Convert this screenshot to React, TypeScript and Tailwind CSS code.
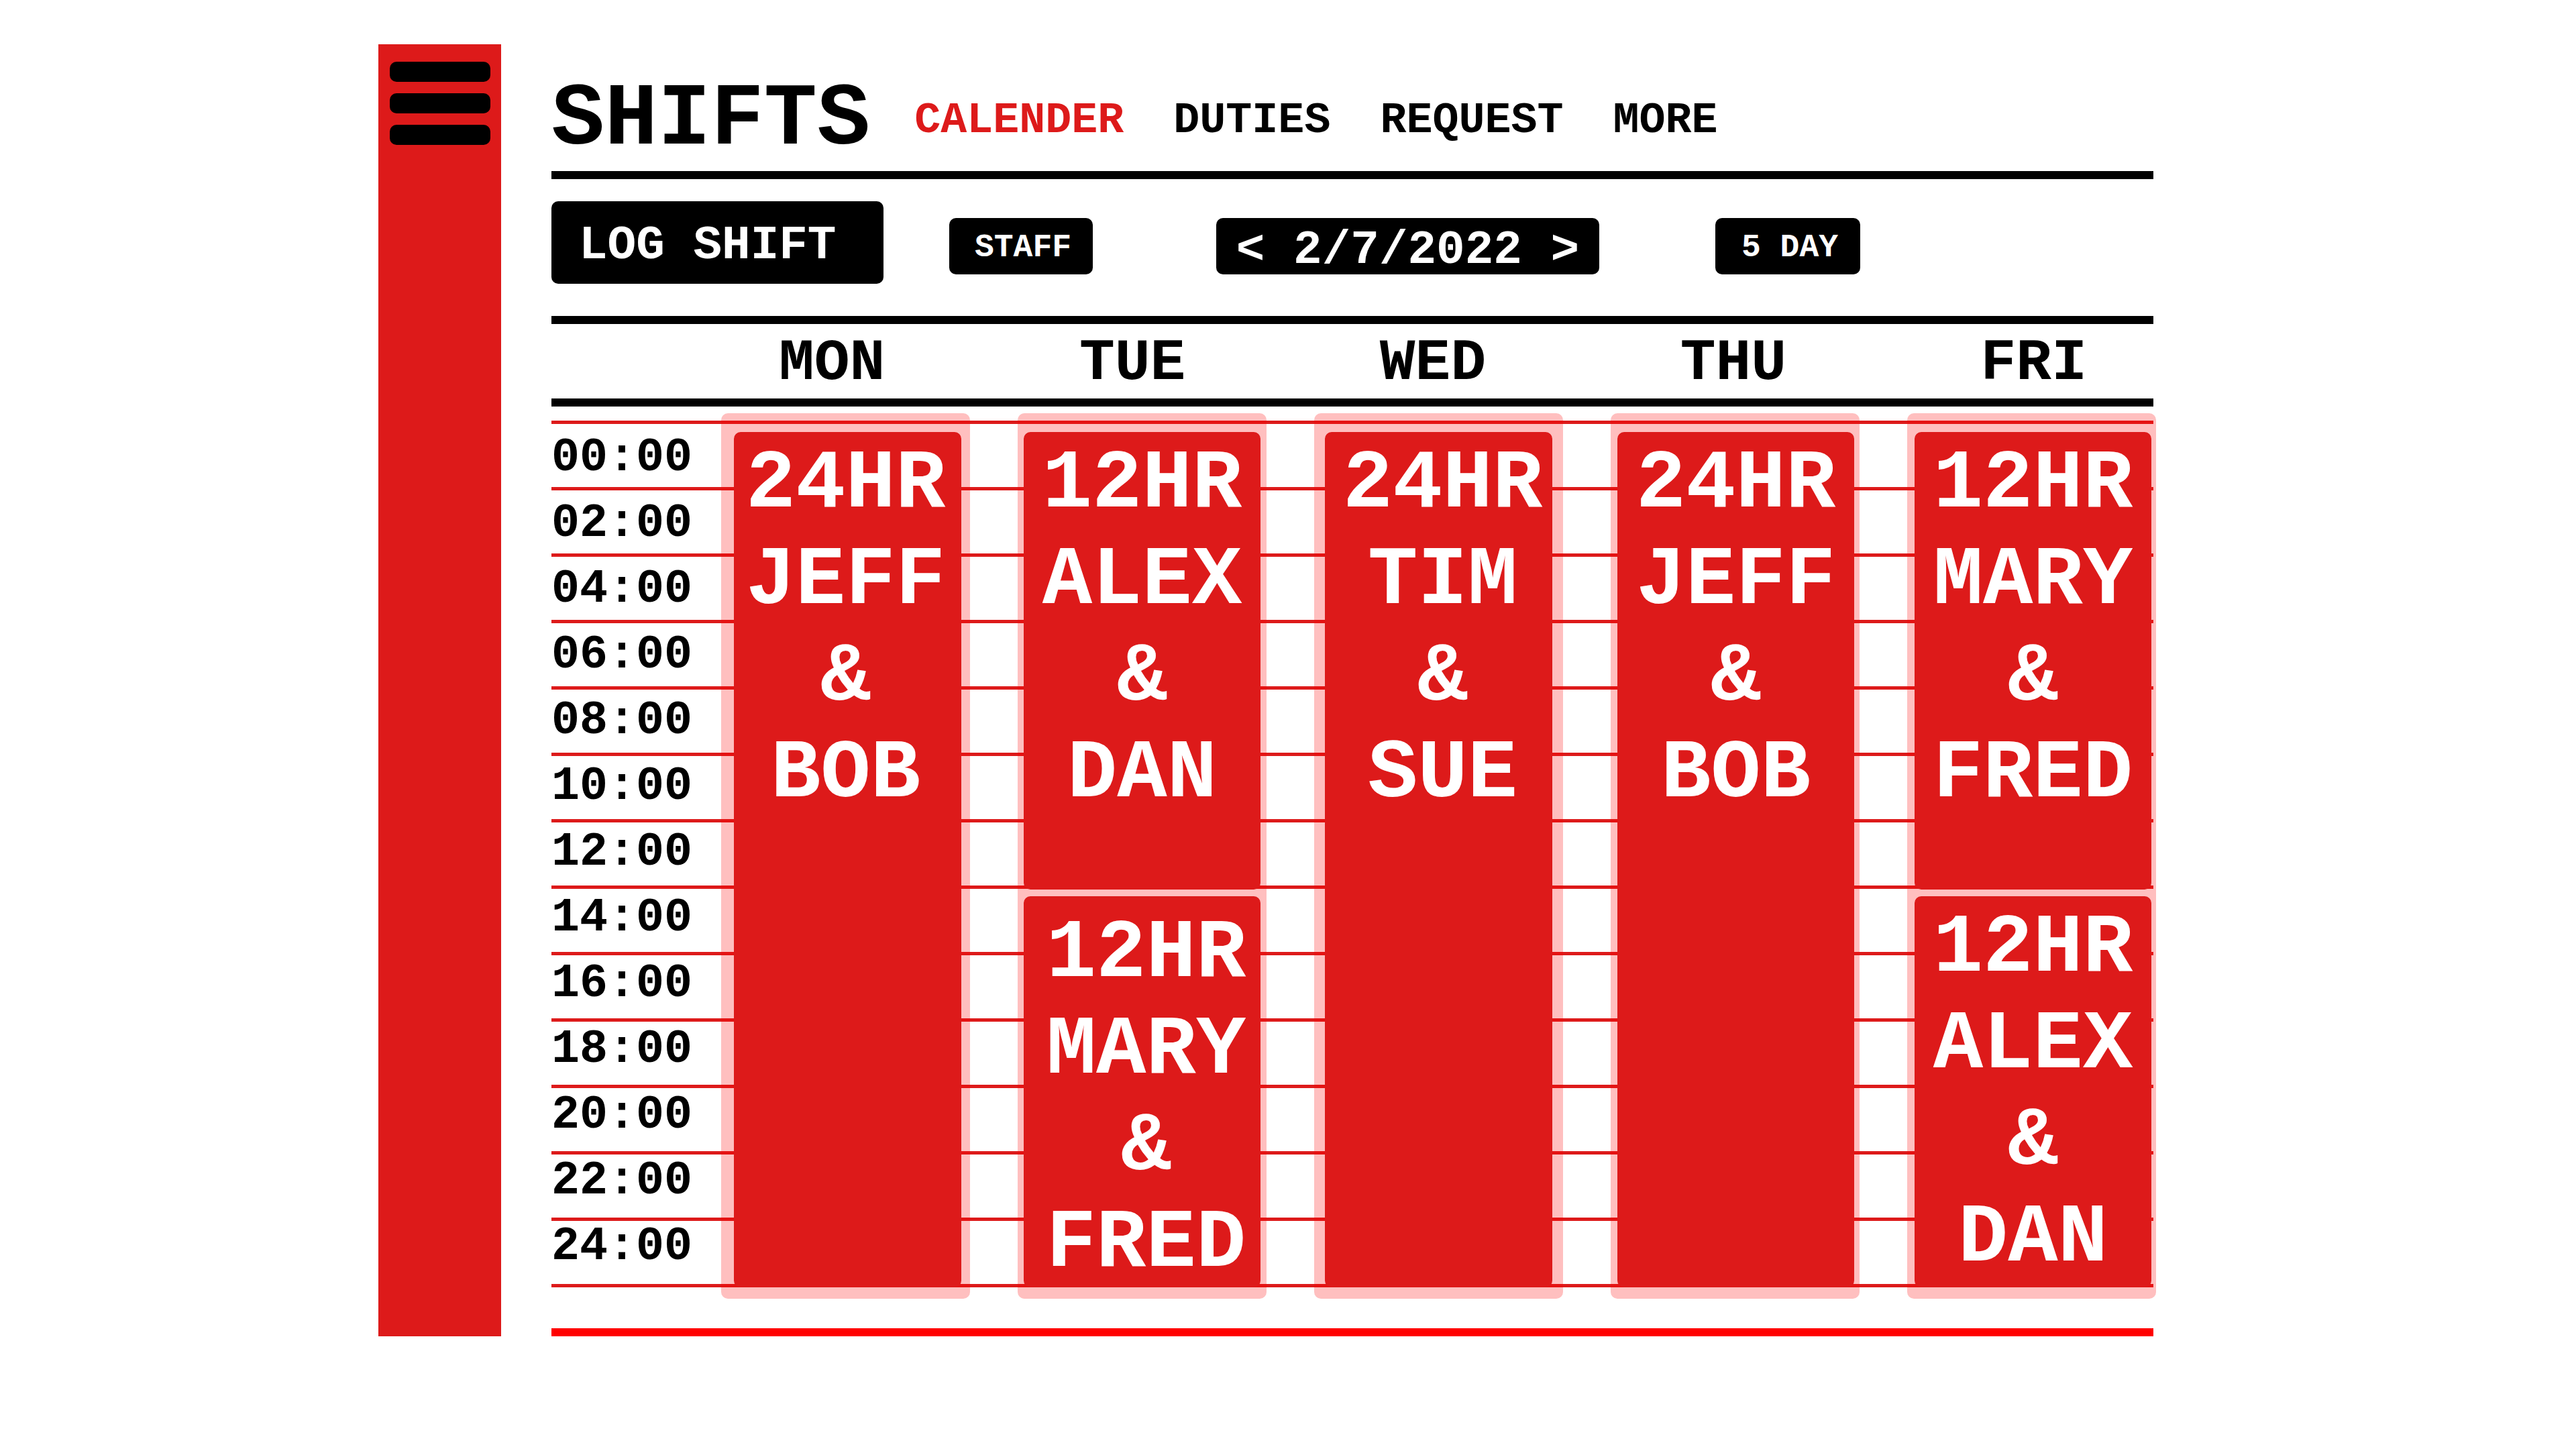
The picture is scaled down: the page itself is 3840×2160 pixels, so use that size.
type Shift = { hours: string; crew: string[]; box: string; text: string };
type Day = { name: string; inset: string; shifts: Shift[] };

const navItems = ["CALENDER", "DUTIES", "REQUEST", "MORE"];

const times = [
  "00:00", "02:00", "04:00", "06:00", "08:00", "10:00", "12:00",
  "14:00", "16:00", "18:00", "20:00", "22:00", "24:00",
];

const days: Day[] = [
  {
    name: "MON",
    inset: "pl-[19px] pr-[13px]",
    shifts: [{ hours: "24HR", crew: ["JEFF", "&", "BOB"], box: "flex-1", text: "pt-[6px] pr-[6px]" }],
  },
  {
    name: "TUE",
    inset: "px-[9px]",
    shifts: [
      { hours: "12HR", crew: ["ALEX", "&", "DAN"], box: "flex-[682]", text: "pt-[6px]" },
      { hours: "12HR", crew: ["MARY", "&", "FRED"], box: "flex-[583]", text: "pt-[14px] pl-[12px]" },
    ],
  },
  {
    name: "WED",
    inset: "px-[16px]",
    shifts: [{ hours: "24HR", crew: ["TIM", "&", "SUE"], box: "flex-1", text: "pt-[6px] pl-[12px]" }],
  },
  {
    name: "THU",
    inset: "pl-[10px] pr-[8px]",
    shifts: [{ hours: "24HR", crew: ["JEFF", "&", "BOB"], box: "flex-1", text: "pt-[6px]" }],
  },
  {
    name: "FRI",
    inset: "pl-[11px] pr-[7px]",
    shifts: [
      { hours: "12HR", crew: ["MARY", "&", "FRED"], box: "flex-[682]", text: "pt-[6px]" },
      { hours: "12HR", crew: ["ALEX", "&", "DAN"], box: "flex-[583]", text: "pt-[6px]" },
    ],
  },
];

function Sidebar() {
  return (
    <aside className="w-[183px] shrink-0 bg-[#dd1a1a] pt-[26px]">
      <button type="button" aria-label="Menu" className="mx-auto flex w-[150px] flex-col gap-[17px]">
        <span className="h-[30px] w-full rounded-[10px] bg-black" />
        <span className="h-[30px] w-full rounded-[10px] bg-black" />
        <span className="h-[30px] w-full rounded-[10px] bg-black" />
      </button>
    </aside>
  );
}

function Header() {
  return (
    <header className="flex items-center gap-[66px] border-b-[12px] border-black pt-[38px]">
      <h1 className="text-[132px] leading-[151px]">SHIFTS</h1>
      <nav className="flex gap-[74px] text-[65px] leading-[80px]">
        {navItems.map((item, i) => (
          <a key={item} href="#" className={i === 0 ? "text-[#dd1a1a]" : "text-black"}>
            {item}
          </a>
        ))}
      </nav>
    </header>
  );
}

function Toolbar() {
  return (
    <div className="flex items-center border-b-[12px] border-black pt-[33px] pb-[48px] text-white">
      <button type="button" className="h-[123px] w-[495px] rounded-[10px] bg-black pt-[9px] pl-[41px] text-left text-[71px] leading-[72px]">
        LOG SHIFT
      </button>
      <div className="ml-[98px] flex pt-[11px]">
        <button type="button" className="h-[84px] w-[214px] rounded-[10px] bg-black pt-[4px] pl-[6px] text-[48px] leading-[48px]">
          STAFF
        </button>
        <div className="ml-[184px] flex h-[84px] w-[571px] items-center justify-center rounded-[10px] bg-black pt-[12px] text-[71px] leading-[72px]">
          <button type="button" aria-label="Previous week">&lt;</button>
          <span className="whitespace-pre"> 2/7/2022 </span>
          <button type="button" aria-label="Next week">&gt;</button>
        </div>
        <button type="button" className="ml-[173px] h-[84px] w-[216px] rounded-[10px] bg-black pt-[4px] pl-[6px] text-[48px] leading-[48px]">
          5 DAY
        </button>
      </div>
    </div>
  );
}

function ShiftBlock({ shift }: { shift: Shift }) {
  return (
    <article className={`min-h-0 rounded-[10px] bg-[#dd1a1a] ${shift.box}`}>
      <div className={`text-center text-[124px] leading-[144px] text-white ${shift.text}`}>
        <h3>{shift.hours}</h3>
        {shift.crew.map((line) => (
          <p key={line}>{line}</p>
        ))}
      </div>
    </article>
  );
}

function Schedule() {
  return (
    <section aria-label="Week schedule">
      <div className="flex justify-between border-b-[12px] border-black pt-[7px] pr-[99px] pl-[339px] text-[88px] leading-[104px]">
        {days.map((day) => (
          <h2 key={day.name}>{day.name}</h2>
        ))}
      </div>

      <div className="grid">
        {/* Two-hour grid lines, stacked in the same cell as the columns */}
        <div className="col-start-1 row-start-1 pt-[21px] pb-[17px]">
          {times.map((time) => (
            <div key={time} className="h-[99px] border-t-[5px] border-[#dd1a1a]" />
          ))}
          <div className="h-[5px] bg-[#dd1a1a]" />
        </div>

        <div className="z-10 col-start-1 row-start-1 flex">
          <ol className="w-[253px] shrink-0 pt-[28px] text-[70px] leading-[98px]">
            {times.map((time) => (
              <li key={time}>{time}</li>
            ))}
          </ol>
          <div className="mt-[10px] -mr-1 grid flex-1 grid-cols-5 gap-[71px]">
            {days.map((day) => (
              <div
                key={day.name}
                className={`flex flex-col gap-[10px] rounded-[10px] bg-[#ff000040] pt-[28px] pb-[17px] ${day.inset}`}
              >
                {day.shifts.map((shift) => (
                  <ShiftBlock key={shift.crew[0]} shift={shift} />
                ))}
              </div>
            ))}
          </div>
        </div>
      </div>

      <div className="mt-[44px] h-[12px] bg-[#ff0000]" />
    </section>
  );
}

export default function App() {
  return (
    <div className="min-h-screen bg-white pt-[66px] pr-[630px] pl-[564px] font-['Liberation_Mono',monospace] font-bold text-black">
      <div className="flex gap-[75px]">
        <Sidebar />
        <main className="min-w-0 flex-1">
          <Header />
          <Toolbar />
          <Schedule />
        </main>
      </div>
    </div>
  );
}
